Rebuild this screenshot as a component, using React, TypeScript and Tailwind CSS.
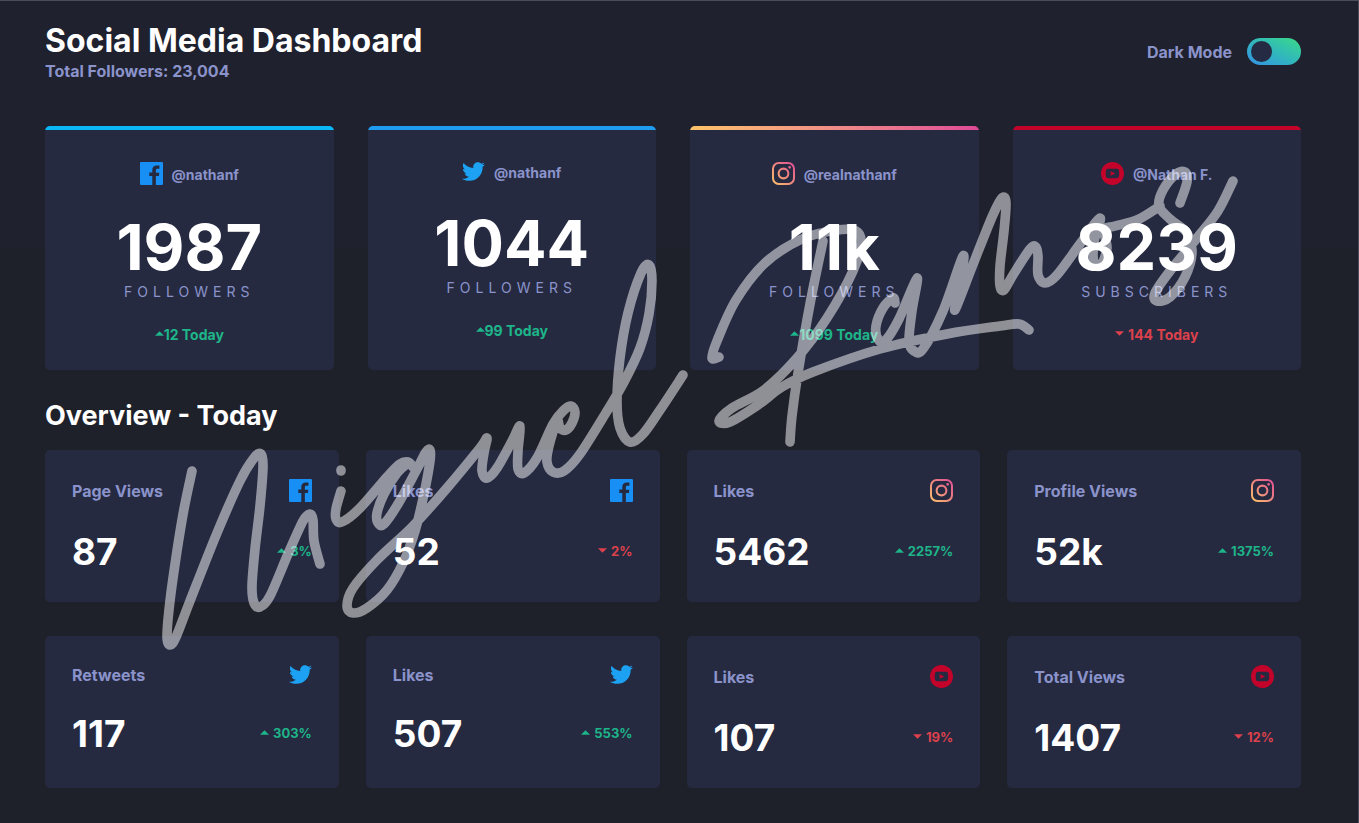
import { useState } from "react";

type Network = "facebook" | "twitter" | "instagram" | "youtube";
type Point = [number, number];

const networkBars: Record<Network, string> = {
  facebook: "bg-[#0ab8f8]",
  twitter: "bg-[#1f9cf0]",
  instagram: "bg-linear-to-r from-[#fdc468] to-[#df4996]",
  youtube: "bg-[#c4032b]",
};

const accounts: {
  network: Network;
  handle: string;
  count: string;
  unit: string;
  delta: string;
  up: boolean;
}[] = [
  { network: "facebook", handle: "@nathanf", count: "1987", unit: "Followers", delta: "12 Today", up: true },
  { network: "twitter", handle: "@nathanf", count: "1044", unit: "Followers", delta: "99 Today", up: true },
  { network: "instagram", handle: "@realnathanf", count: "11k", unit: "Followers", delta: "1099 Today", up: true },
  { network: "youtube", handle: "@Nathan F.", count: "8239", unit: "Subscribers", delta: "144 Today", up: false },
];

const stats: { network: Network; label: string; value: string; delta: string; up: boolean }[] = [
  { network: "facebook", label: "Page Views", value: "87", delta: "3%", up: true },
  { network: "facebook", label: "Likes", value: "52", delta: "2%", up: false },
  { network: "instagram", label: "Likes", value: "5462", delta: "2257%", up: true },
  { network: "instagram", label: "Profile Views", value: "52k", delta: "1375%", up: true },
  { network: "twitter", label: "Retweets", value: "117", delta: "303%", up: true },
  { network: "twitter", label: "Likes", value: "507", delta: "553%", up: true },
  { network: "youtube", label: "Likes", value: "107", delta: "19%", up: false },
  { network: "youtube", label: "Total Views", value: "1407", delta: "12%", up: false },
];

function NetworkIcon({ network, id }: { network: Network; id: string }) {
  if (network === "facebook") {
    return (
      <svg viewBox="0 0 24 24" className="h-[23px] w-[23px] shrink-0" aria-hidden="true">
        <path
          fill="#178ff5"
          d="M22.676 0H1.324C.593 0 0 .593 0 1.324v21.352C0 23.408.593 24 1.324 24h11.494v-9.294H9.689v-3.621h3.129V8.41c0-3.099 1.894-4.785 4.659-4.785 1.325 0 2.464.097 2.796.141v3.24h-1.921c-1.5 0-1.792.721-1.792 1.771v2.311h3.584l-.465 3.63H16.56V24h6.115c.733 0 1.325-.592 1.325-1.324V1.324C24 .593 23.408 0 22.676 0"
        />
      </svg>
    );
  }
  if (network === "twitter") {
    return (
      <svg viewBox="0 2.2 24 19.6" className="h-[19px] w-[23px] shrink-0" aria-hidden="true">
        <path
          fill="#1da1f2"
          d="M23.954 4.569c-.885.389-1.83.654-2.825.775 1.014-.611 1.794-1.574 2.163-2.723-.951.555-2.005.959-3.127 1.184-.896-.959-2.173-1.559-3.591-1.559-2.717 0-4.92 2.203-4.92 4.917 0 .39.045.765.127 1.124C7.691 8.094 4.066 6.13 1.64 3.161c-.427.722-.666 1.561-.666 2.475 0 1.71.87 3.213 2.188 4.096-.807-.026-1.566-.248-2.228-.616v.061c0 2.385 1.693 4.374 3.946 4.827-.413.111-.849.171-1.296.171-.314 0-.615-.03-.916-.086.631 1.953 2.445 3.377 4.604 3.417-1.68 1.319-3.809 2.105-6.102 2.105-.39 0-.779-.023-1.17-.067 2.189 1.394 4.768 2.209 7.557 2.209 9.054 0 13.999-7.496 13.999-13.986 0-.209 0-.42-.015-.63.961-.689 1.8-1.56 2.46-2.548l-.047-.02z"
        />
      </svg>
    );
  }
  if (network === "instagram") {
    const paint = `url(#${id})`;
    return (
      <svg viewBox="0 0 24 24" className="h-[23px] w-[23px] shrink-0" aria-hidden="true">
        <defs>
          <linearGradient id={id} x1="0" y1="1" x2="1" y2="0">
            <stop offset="0" stopColor="#fdc468" />
            <stop offset="1" stopColor="#df4996" />
          </linearGradient>
        </defs>
        <path
          fill={paint}
          fillRule="evenodd"
          d="M7 0h10a7 7 0 0 1 7 7v10a7 7 0 0 1-7 7H7a7 7 0 0 1-7-7V7a7 7 0 0 1 7-7zm0 2.1A4.9 4.9 0 0 0 2.1 7v10A4.9 4.9 0 0 0 7 21.900h10a4.900 4.900 0 0 0 4.900-4.900V7A4.900 4.900 0 0 0 17 2.100zM12 5.840a6.160 6.160 0 1 1 0 12.320 6.160 6.160 0 0 1 0-12.320zm0 2.160a4 4 0 1 0 0 8 4 4 0 0 0 0-8zM18.400 4.150a1.440 1.440 0 1 1 0 2.880 1.440 1.440 0 0 1 0-2.880z"
        />
      </svg>
    );
  }
  return (
    <svg viewBox="0 0 24 24" className="h-[23px] w-[23px] shrink-0" aria-hidden="true">
      <path
        fill="#c4032b"
        d="M12 0C5.370 0 0 5.370 0 12s5.370 12 12 12 12-5.370 12-12S18.630 0 12 0zm4.440 16.890c-2.100.140-6.780.140-8.880 0C5.280 16.740 5.020 15.620 5 12c.020-3.630.290-4.740 2.560-4.890 2.100-.140 6.780-.140 8.880 0C18.720 7.260 18.980 8.380 19 12c-.020 3.630-.280 4.740-2.560 4.890zM10 9.660l4.920 2.340L10 14.350z"
      />
    </svg>
  );
}

function Arrow({ up }: { up: boolean }) {
  return (
    <svg viewBox="0 0 8 4" className="mb-[3px] h-[5px] w-[9px] shrink-0" aria-hidden="true">
      <path d={up ? "M0 4l4-4 4 4z" : "M0 0l4 4 4-4z"} fill="currentColor" />
    </svg>
  );
}

const signatureStrokes: Point[][] = [
  [
    [192, 470], [184, 508], [177, 550], [170, 600], [167, 635], [170, 644], [176, 636], [190, 600], [217, 532],
    [240, 480], [254, 457], [261, 453], [263, 466], [260, 505], [255, 548], [252, 585], [254, 602], [260, 606],
    [270, 595], [288, 553], [303, 520], [310, 513], [313, 519], [314, 540], [320, 563],
  ],
  [[341, 469], [341, 470]],
  [
    [341, 490], [336, 508], [336, 518], [342, 521], [360, 507], [387, 476], [400, 463], [408, 461], [413, 466],
  ],
  [
    [408, 462], [397, 472], [384, 493], [377, 512], [378, 522], [384, 523], [398, 503], [417, 468], [426, 451],
    [430, 449], [430, 460], [424, 493], [415, 530], [403, 562], [387, 589], [367, 607], [353, 612], [347, 605],
    [353, 587], [377, 559], [413, 525], [447, 487], [480, 447], [487, 437], [484, 452], [482, 470], [487, 477],
    [497, 467], [512, 440], [520, 425], [518, 450], [518, 468], [524, 472], [537, 457], [553, 423], [564, 409],
    [571, 405], [575, 411], [572, 422], [566, 429], [560, 427], [557, 420], [549, 445], [547, 461], [553, 471],
    [564, 470], [580, 453], [607, 410], [624, 381], [640, 347], [649, 313], [652, 280], [649, 264], [641, 272],
    [628, 312], [620, 357], [617, 400], [620, 427], [630, 441], [643, 433], [660, 409], [683, 374],
  ],
  [
    [719, 356], [712, 357], [717, 340], [736, 299], [765, 262], [802, 238], [837, 229], [856, 230], [861, 242],
    [853, 270], [827, 317], [797, 357], [764, 389], [732, 407], [719, 420], [730, 421], [758, 404], [782, 386],
    [813, 371], [880, 348], [947, 333], [1000, 325], [1019, 323], [1029, 329],
  ],
  [[823, 240], [810, 303], [798, 372], [792, 415], [790, 441]],
  [
    [895, 302], [893, 297], [883, 307], [876, 325], [878, 338], [885, 340], [899, 318], [917, 277], [912, 310],
    [909, 340], [914, 350], [923, 348], [943, 310], [963, 255], [960, 283], [955, 309], [972, 266], [992, 216],
    [1002, 197], [1006, 202], [1004, 230], [1000, 265], [1000, 285], [1004, 289], [1013, 274], [1030, 248],
    [1036, 246], [1038, 255], [1038, 274], [1045, 282], [1057, 274], [1080, 243], [1100, 217], [1094, 241],
    [1094, 262], [1101, 264], [1107, 247], [1104, 229], [1115, 225], [1137, 219], [1160, 205],
  ],
  [
    [1180, 202], [1187, 181], [1185, 171], [1176, 173], [1163, 189], [1159, 205], [1170, 218], [1187, 232],
    [1192, 252], [1185, 276], [1170, 296], [1157, 300], [1155, 292], [1170, 270], [1197, 237], [1218, 210],
    [1233, 180],
  ],
];

/** Turns a list of points into one smooth cubic curve that passes through all of them. */
function smooth(points: Point[]): string {
  let d = `M${points[0][0]} ${points[0][1]}`;
  for (let i = 0; i < points.length - 1; i++) {
    const before = points[Math.max(i - 1, 0)];
    const from = points[i];
    const to = points[i + 1];
    const after = points[Math.min(i + 2, points.length - 1)];
    const c1 = [from[0] + (to[0] - before[0]) / 6, from[1] + (to[1] - before[1]) / 6];
    const c2 = [to[0] - (after[0] - from[0]) / 6, to[1] - (after[1] - from[1]) / 6];
    d += ` C${c1[0]} ${c1[1]} ${c2[0]} ${c2[1]} ${to[0]} ${to[1]}`;
  }
  return d;
}

function Signature() {
  return (
    <svg
      viewBox="0 0 1358 822"
      role="img"
      aria-label="Signature of Miguel Ramos"
      className="pointer-events-none absolute top-0 left-0 w-full opacity-50"
    >
      <path
        d={signatureStrokes.map(smooth).join(" ")}
        fill="none"
        stroke="white"
        strokeWidth="9.6"
        strokeLinecap="round"
        strokeLinejoin="round"
      />
    </svg>
  );
}

export default function App() {
  const [dark, setDark] = useState(true);

  return (
    <div className="relative min-h-screen border-t border-r border-[#4b4d5b] bg-[#1e202a] bg-linear-to-b from-[#1f212e] from-[247px] to-[#1e202a] to-[247px] pt-[22px] pr-[57px] pb-[35px] pl-[45px] font-['Inter',sans-serif] font-bold text-[#8b93cb]">
      <header className="flex items-start justify-between">
        <div>
          <h1 className="text-[32px] leading-9 text-white">Social Media Dashboard</h1>
          <p className="text-base leading-6">Total Followers: 23,004</p>
        </div>
        <label className="mt-[15px] flex items-center gap-[15px] text-base">
          Dark Mode
          <input
            type="checkbox"
            checked={dark}
            onChange={(e) => setDark(e.target.checked)}
            className="flex h-[27px] w-[54px] cursor-pointer appearance-none items-center justify-end rounded-full bg-linear-to-tr from-[#378fe6] to-[#3eda82] px-1 before:h-[21px] before:w-[21px] before:rounded-full before:bg-[#252b43] checked:justify-start"
          />
        </label>
      </header>

      <section className="mt-[43px] grid grid-cols-4 gap-[34px]">
        {accounts.map((a) => (
          <article key={a.network} className="flex flex-col items-center overflow-hidden rounded-[5px] bg-[#252a41] pb-[25px]">
            <div className={`h-1 w-full ${networkBars[a.network]}`} />
            <div className="mt-8 flex items-center gap-[9px]">
              <NetworkIcon network={a.network} id={`account-${a.network}`} />
              <span className="pt-[3px] text-sm leading-4">{a.handle}</span>
            </div>
            <p className="mt-[30px] text-[63px] leading-16 text-white">{a.count}</p>
            <p className="mt-[3px] text-sm leading-5 font-normal tracking-[5px] uppercase">{a.unit}</p>
            <p
              className={`mt-[23px] flex items-center text-sm leading-5 ${a.up ? "text-[#1eb589]" : "gap-1 text-[#dc414c]"}`}
            >
              <Arrow up={a.up} />
              {a.delta}
            </p>
          </article>
        ))}
      </section>

      <h2 className="mt-[28px] text-[27px] leading-9 text-white">Overview - Today</h2>

      <section className="mt-[16px] grid grid-cols-4 gap-x-[27px] gap-y-[34px]">
        {stats.map((s, i) => (
          <article key={i} className="rounded-[5px] bg-[#252a41] px-[27px] pt-[29px] pb-[30px]">
            <div className="flex items-center justify-between">
              <h3 className="pt-px text-base leading-[18px]">{s.label}</h3>
              <NetworkIcon network={s.network} id={`stat-${i}`} />
            </div>
            <div className="mt-[30px] flex items-center justify-between">
              <p className="text-[37px] leading-10 text-white">{s.value}</p>
              <p className={`flex items-center gap-1 text-[13px] ${s.up ? "text-[#1eb589]" : "text-[#dc414c]"}`}>
                <Arrow up={s.up} />
                {s.delta}
              </p>
            </div>
          </article>
        ))}
      </section>
      <Signature />
    </div>
  );
}
